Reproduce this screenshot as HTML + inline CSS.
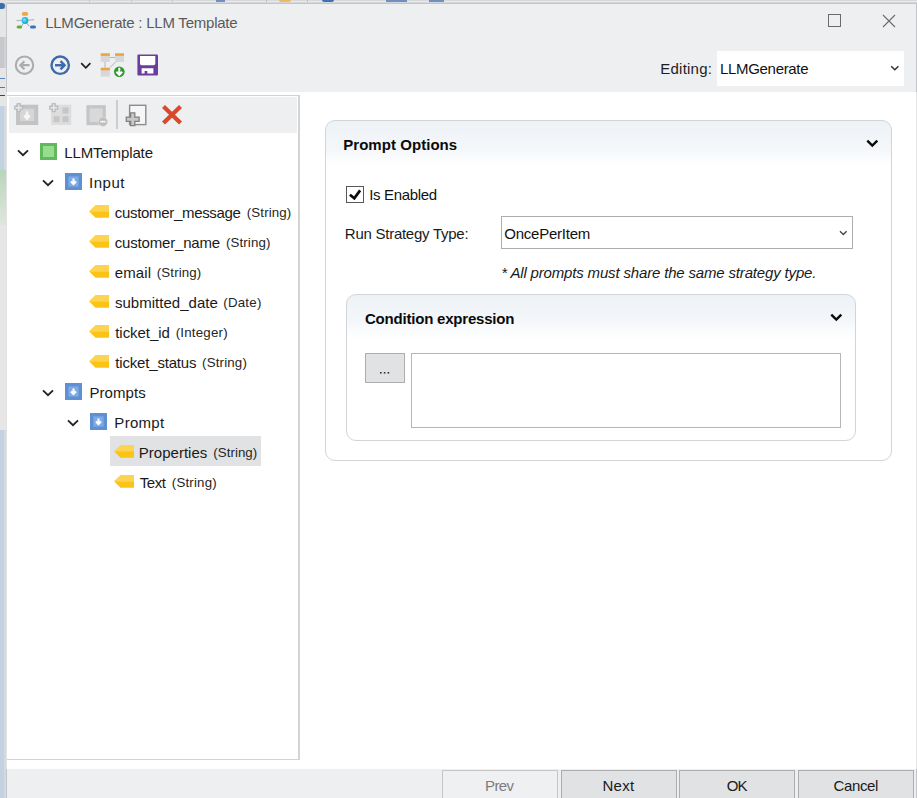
<!DOCTYPE html>
<html><head><meta charset="utf-8">
<style>
*{box-sizing:border-box;margin:0;padding:0}
html,body{width:917px;height:798px;overflow:hidden;background:#eeeff1}
body{position:relative;font-family:"Liberation Sans",sans-serif;color:#1a1a1a}
.a{position:absolute}
.t{position:absolute;line-height:1;white-space:pre}
svg{position:absolute;overflow:visible}
</style></head><body>
<!-- background window strip -->
<div class="a" style="left:0;top:0;width:6px;height:798px;background:#c2d2e0"></div>
<div class="a" style="left:4px;top:0;width:2px;height:798px;background:#d2d9e2"></div>
<div class="a" style="left:0;top:0;width:6px;height:3px;background:#dfe0e2"></div>
<div class="a" style="left:0;top:3px;width:5px;height:6px;background:#3b6ea8;border-radius:0 3px 3px 0"></div>
<div class="a" style="left:0;top:9px;width:6px;height:28px;background:#e6e6e7"></div>
<div class="a" style="left:0;top:37px;width:6px;height:31px;background:#c7c8cb"></div>
<div class="a" style="left:4px;top:37px;width:2px;height:31px;background:#d0d1d5"></div>
<div class="a" style="left:0;top:68px;width:6px;height:38px;background:#e6e6e7"></div>
<div class="a" style="left:0;top:78px;width:5px;height:1px;background:#5a86b8"></div>
<div class="a" style="left:0;top:87px;width:5px;height:1px;background:#4a7ab0"></div>
<div class="a" style="left:0;top:95px;width:5px;height:1px;background:#2c4a70"></div>
<div class="a" style="left:0;top:170px;width:6px;height:55px;background:linear-gradient(#b8d6b8,#dfe6df)"></div>
<div class="a" style="left:0;top:225px;width:6px;height:205px;background:#e6e6e7"></div>

<!-- window frame -->
<div class="a" style="left:6px;top:0;width:911px;height:1px;background:#d8d9da"></div>
<div class="a" style="left:6px;top:1px;width:911px;height:1px;background:#e8e9ea"></div>
<div class="a" style="left:6px;top:2px;width:911px;height:1px;background:#d6d7da"></div>
<div class="a" style="left:6px;top:3px;width:911px;height:795px;border-left:1px solid #c5c6c9;border-top:1px solid #c4c5c8;border-right:1px solid #c4c5c8;background:#eeeff1"></div>
<div class="a" style="left:89px;top:0;width:1px;height:2px;background:#c8c8c8"></div>
<div class="a" style="left:131px;top:0;width:1px;height:2px;background:#c8c8c8"></div>
<div class="a" style="left:172px;top:0;width:1px;height:2px;background:#c8c8c8"></div>
<div class="a" style="left:216px;top:0;width:9px;height:2px;background:#6f90bd"></div>
<div class="a" style="left:266px;top:0;width:1px;height:2px;background:#c0c0c0"></div>
<div class="a" style="left:279px;top:0;width:12px;height:2px;background:#f0b860;border-radius:0 0 5px 5px"></div>
<div class="a" style="left:307px;top:0;width:1px;height:2px;background:#c0c0c0"></div>
<div class="a" style="left:322px;top:0;width:12px;height:2px;background:#4472b0;border-radius:0 0 5px 5px"></div>
<div class="a" style="left:386px;top:0;width:21px;height:2px;background:#6f90bd"></div>
<div class="a" style="left:429px;top:0;width:15px;height:2px;background:#6f90bd"></div>
<!-- title -->
<svg style="left:14px;top:10px" width="26" height="22" viewBox="0 0 26 22">
  <defs><radialGradient id="cg" cx="0.4" cy="0.4" r="0.6"><stop offset="0" stop-color="#8fe6f5"/><stop offset="0.6" stop-color="#22bde0"/><stop offset="1" stop-color="#1aa9d0"/></radialGradient></defs>
  <path d="M2.5 10.6L8 10.2M14 10.2L20 9.6" stroke="#b4b4b4" stroke-width="1.1"/>
  <path d="M9.6 13L7.6 16.2M12.6 13L15.2 16.2" stroke="#9a9a9a" stroke-width="0.9"/>
  <rect x="7.8" y="2" width="6.4" height="3.8" rx="1.9" fill="#f0a54a"/>
  <circle cx="11" cy="10.5" r="3.4" fill="url(#cg)"/>
  <rect x="2.6" y="15.5" width="5.5" height="3" rx="1.5" fill="#5cb03c"/>
  <rect x="16" y="15.5" width="6" height="3" rx="1.5" fill="#3d6fc0"/>
</svg>
<svg style="left:828px;top:14px" width="13" height="13"><rect x="0.5" y="0.5" width="12" height="12" fill="none" stroke="#6a6a6a" stroke-width="1"/></svg>
<svg style="left:882px;top:14px" width="14" height="14"><path d="M1 1L13 13M13 1L1 13" stroke="#6a6a6a" stroke-width="1.1"/></svg>

<!-- main toolbar -->
<svg style="left:14px;top:55px" width="21" height="21" viewBox="0 0 21 21">
  <circle cx="10.5" cy="10.2" r="8.7" fill="none" stroke="#acacac" stroke-width="2.1"/>
  <path d="M15.6 10.2H6.4M10.4 6.2L6.4 10.2L10.4 14.2" fill="none" stroke="#acacac" stroke-width="2.3"/>
</svg>
<svg style="left:50px;top:55px" width="21" height="21" viewBox="0 0 21 21">
  <circle cx="10.2" cy="10.2" r="8.7" fill="none" stroke="#3d6aab" stroke-width="2.4"/>
  <path d="M5 10.2H14.6M10.5 6.1L14.6 10.2L10.5 14.3" fill="none" stroke="#3d6aab" stroke-width="2.4"/>
</svg>
<svg style="left:80px;top:62px" width="12" height="8" viewBox="0 0 12 8"><path d="M1.2 1.2L5.8 5.8L10.4 1.2" fill="none" stroke="#1e1e1e" stroke-width="1.7"/></svg>
<svg style="left:100px;top:53px" width="26" height="25" viewBox="0 0 26 25">
  <rect x="0.7" y="2.5" width="9.2" height="6.5" fill="#d6d7da"/>
  <rect x="15" y="2.5" width="9" height="6.5" fill="#d6d7da"/>
  <rect x="0.7" y="17" width="9.2" height="6.6" fill="#d6d7da"/>
  <rect x="0.7" y="0.3" width="9.2" height="2.6" fill="#f0a23c"/>
  <rect x="15" y="0.3" width="9" height="2.6" fill="#f0a23c"/>
  <rect x="0.7" y="14.7" width="9.2" height="2.6" fill="#f0a23c"/>
  <path d="M9.9 4.5H15M5 9V14.7M15.5 9L9.9 14.7" stroke="#a9b1b5" stroke-width="0.9" fill="none"/>
  <circle cx="19.3" cy="18.8" r="5.3" fill="#2b9a2b"/>
  <path d="M19.3 14.8V21.5M16.4 18.8L19.3 21.9L22.2 18.8" stroke="#fff" stroke-width="2" fill="none"/>
</svg>
<svg style="left:137px;top:54px" width="22" height="22" viewBox="0 0 22 22">
  <rect x="0.4" y="0.5" width="20.6" height="21" rx="1" fill="#6c3d9e"/>
  <path d="M3 2H18.3V9.6Q18.3 11.2 16.7 11.2H4.6Q3 11.2 3 9.6Z" fill="#fff"/>
  <path d="M4.6 14.2H16.4V19.6H10.3V17H7.6V19.6H4.6Z" fill="#fff"/>
</svg>

<div class="a" style="left:717px;top:51px;width:187px;height:35px;background:#fff"></div>
<svg style="left:890px;top:65px" width="10" height="7" viewBox="0 0 10 7"><path d="M1.2 1.2L4.8 4.8L8.4 1.2" fill="none" stroke="#333" stroke-width="1.5"/></svg>

<!-- content area -->
<div class="a" style="left:7px;top:92px;width:909px;height:677px;background:#fff"></div>
<div class="a" style="left:6px;top:92px;width:1px;height:677px;background:#e2e2e3"></div>
<div class="a" style="left:916px;top:92px;width:1px;height:677px;background:#e5e5e5"></div>
<!-- left panel -->
<div class="a" style="left:7px;top:95px;width:293px;height:665px;border-top:1px solid #d2d2d2;border-right:2px solid #d4d4d4;border-bottom:1px solid #d2d2d2"></div>
<div class="a" style="left:9px;top:97px;width:288px;height:36px;background:#eeeff1"></div>
<div id="tree">
<!-- tree toolbar -->
<svg style="left:14px;top:103px" width="24" height="24" viewBox="0 0 24 24">
  <rect x="4" y="3.7" width="18.2" height="16.3" fill="#d6d6d6" stroke="#c3c3c3" stroke-width="4"/>
  <path d="M13 8.6V15.4M10.2 12.4L13 15.6L15.8 12.4" stroke="#f6f6f6" stroke-width="2.4" fill="none"/>
  <path d="M3.3 0.8H6.1V3.3H8.6V6.1H6.1V8.6H3.3V6.1H0.8V3.3H3.3Z" fill="#e9e9e9" stroke="#bdbdbd" stroke-width="1.4"/>
</svg>
<svg style="left:49px;top:103px" width="24" height="24" viewBox="0 0 24 24">
  <rect x="2" y="1.7" width="20.3" height="20.3" fill="#dddddd"/>
  <rect x="13.5" y="4.5" width="6" height="6" fill="#c6c6c6"/>
  <rect x="4.6" y="13.2" width="6" height="6" fill="#c6c6c6"/>
  <rect x="13.5" y="13.2" width="6" height="6" fill="#c6c6c6"/>
  <path d="M3.3 0.8H6.1V3.3H8.6V6.1H6.1V8.6H3.3V6.1H0.8V3.3H3.3Z" fill="#e9e9e9" stroke="#bdbdbd" stroke-width="1.4"/>
</svg>
<svg style="left:86px;top:105px" width="24" height="24" viewBox="0 0 24 24">
  <rect x="2" y="1.8" width="16.2" height="16.8" fill="#d9d9d9" stroke="#c5c5c5" stroke-width="3.2"/>
  <circle cx="16.9" cy="16.7" r="4.6" fill="#bdbdbd" stroke="#e0e0e0" stroke-width="0.8"/>
  <path d="M14.2 16.7H19.6" stroke="#f2f2f2" stroke-width="1.8"/>
</svg>
<div class="a" style="left:116px;top:100px;width:2px;height:29px;background:#cbcdd0"></div>
<svg style="left:125px;top:104px" width="24" height="24" viewBox="0 0 24 24">
  <rect x="4.6" y="1.3" width="16.2" height="19.3" fill="#f6f6f6" stroke="#8c8c8c" stroke-width="1.4"/>
  <path d="M5.6 8.8H9.8V13.1H14.1V17.3H9.8V21.6H5.6V17.3H1.3V13.1H5.6Z" fill="#c8c8c8" stroke="#808080" stroke-width="1.3"/>
</svg>
<svg style="left:161px;top:104px" width="23" height="22" viewBox="0 0 23 22">
  <path d="M2.5 2.5L19.5 19M19.5 2.5L2.5 19" stroke="#d8482a" stroke-width="4.2"/>
</svg>

<div class="a" style="left:110px;top:436px;width:151px;height:30px;background:#e1e2e4"></div>
<svg style="left:17px;top:149px" width="12" height="8" viewBox="0 0 12 8"><path d="M1 1.3L6 6.2L11 1.3" fill="none" stroke="#222" stroke-width="1.8"/></svg>
<div class="a" style="left:40px;top:143px;width:17px;height:17px;background:#97dd8f;border:3px solid #62b85c"></div>
<svg style="left:42px;top:179px" width="12" height="8" viewBox="0 0 12 8"><path d="M1 1.3L6 6.2L11 1.3" fill="none" stroke="#222" stroke-width="1.8"/></svg>
<svg style="left:65px;top:173px" width="17" height="17" viewBox="0 0 17 17"><rect x="0" y="0" width="17" height="17" fill="#5f90d2"/><rect x="3.4" y="3.4" width="10.2" height="10.2" fill="#7eabe6"/><path d="M8.5 5.4V10.8M6 8.4L8.5 11L11 8.4" stroke="#fff" stroke-width="2.1" fill="none"/></svg>
<svg style="left:88.5px;top:205px" width="21" height="13" viewBox="0 0 21 13"><defs></defs><path d="M0 6.2L6.5 0H20V6.2Z" fill="#fdd452"/><path d="M0 6.2L6.5 12.8H20V6.2Z" fill="#fbc313"/></svg>
<svg style="left:88.5px;top:235px" width="21" height="13" viewBox="0 0 21 13"><defs></defs><path d="M0 6.2L6.5 0H20V6.2Z" fill="#fdd452"/><path d="M0 6.2L6.5 12.8H20V6.2Z" fill="#fbc313"/></svg>
<svg style="left:88.5px;top:265px" width="21" height="13" viewBox="0 0 21 13"><defs></defs><path d="M0 6.2L6.5 0H20V6.2Z" fill="#fdd452"/><path d="M0 6.2L6.5 12.8H20V6.2Z" fill="#fbc313"/></svg>
<svg style="left:88.5px;top:295px" width="21" height="13" viewBox="0 0 21 13"><defs></defs><path d="M0 6.2L6.5 0H20V6.2Z" fill="#fdd452"/><path d="M0 6.2L6.5 12.8H20V6.2Z" fill="#fbc313"/></svg>
<svg style="left:88.5px;top:325px" width="21" height="13" viewBox="0 0 21 13"><defs></defs><path d="M0 6.2L6.5 0H20V6.2Z" fill="#fdd452"/><path d="M0 6.2L6.5 12.8H20V6.2Z" fill="#fbc313"/></svg>
<svg style="left:88.5px;top:355px" width="21" height="13" viewBox="0 0 21 13"><defs></defs><path d="M0 6.2L6.5 0H20V6.2Z" fill="#fdd452"/><path d="M0 6.2L6.5 12.8H20V6.2Z" fill="#fbc313"/></svg>
<svg style="left:42px;top:389px" width="12" height="8" viewBox="0 0 12 8"><path d="M1 1.3L6 6.2L11 1.3" fill="none" stroke="#222" stroke-width="1.8"/></svg>
<svg style="left:65px;top:383px" width="17" height="17" viewBox="0 0 17 17"><rect x="0" y="0" width="17" height="17" fill="#5f90d2"/><rect x="3.4" y="3.4" width="10.2" height="10.2" fill="#7eabe6"/><path d="M8.5 5.4V10.8M6 8.4L8.5 11L11 8.4" stroke="#fff" stroke-width="2.1" fill="none"/></svg>
<svg style="left:67px;top:419px" width="12" height="8" viewBox="0 0 12 8"><path d="M1 1.3L6 6.2L11 1.3" fill="none" stroke="#222" stroke-width="1.8"/></svg>
<svg style="left:90px;top:413px" width="17" height="17" viewBox="0 0 17 17"><rect x="0" y="0" width="17" height="17" fill="#5f90d2"/><rect x="3.4" y="3.4" width="10.2" height="10.2" fill="#7eabe6"/><path d="M8.5 5.4V10.8M6 8.4L8.5 11L11 8.4" stroke="#fff" stroke-width="2.1" fill="none"/></svg>
<svg style="left:113.5px;top:445px" width="21" height="13" viewBox="0 0 21 13"><defs></defs><path d="M0 6.2L6.5 0H20V6.2Z" fill="#fdd452"/><path d="M0 6.2L6.5 12.8H20V6.2Z" fill="#fbc313"/></svg>
<svg style="left:113.5px;top:475px" width="21" height="13" viewBox="0 0 21 13"><defs></defs><path d="M0 6.2L6.5 0H20V6.2Z" fill="#fdd452"/><path d="M0 6.2L6.5 12.8H20V6.2Z" fill="#fbc313"/></svg>
</div><!--/tree-->

<!-- right panel -->
<div id="right">
<div class="a" style="left:325px;top:120px;width:567px;height:341px;border:1px solid #d2d4d6;border-radius:10px;background:linear-gradient(#edf2f6 0px,#f4f7fa 28px,#ffffff 46px)"></div>
<svg style="left:866px;top:139px" width="13" height="9" viewBox="0 0 13 9"><path d="M1.3 1.6L6.3 6.6L11.3 1.6" fill="none" stroke="#0a0a0a" stroke-width="2.4"/></svg>
<div class="a" style="left:346px;top:186px;width:18px;height:17px;border:1px solid #575757;background:#fff"></div>
<svg style="left:346px;top:186px" width="18" height="17" viewBox="0 0 18 17"><path d="M3.9 8.8L8.3 12.4L14.1 4.4" fill="none" stroke="#0a0a0a" stroke-width="2.7"/></svg>
<div class="a" style="left:501px;top:216px;width:352px;height:33px;border:1px solid #adadad;background:#fff"></div>
<svg style="left:839px;top:230px" width="9" height="7" viewBox="0 0 9 7"><path d="M1 1.2L4.3 4.6L7.6 1.2" fill="none" stroke="#4a4a4a" stroke-width="1.4"/></svg>
<div class="a" style="left:346px;top:294px;width:510px;height:147px;border:1px solid #d2d4d6;border-radius:10px;background:linear-gradient(#edf2f6 0px,#f4f7fa 26px,#ffffff 44px)"></div>
<svg style="left:830px;top:313px" width="13" height="9" viewBox="0 0 13 9"><path d="M1.3 1.6L6.3 6.6L11.3 1.6" fill="none" stroke="#0a0a0a" stroke-width="2.4"/></svg>
<div class="a" style="left:365px;top:353px;width:40px;height:30px;border:1px solid #acadaf;background:#e1e2e4"></div>
<svg style="left:380.3px;top:372px" width="10" height="3"><rect x="0" y="0" width="1.6" height="1.6" fill="#333"/><rect x="3.8" y="0" width="1.6" height="1.6" fill="#333"/><rect x="7.6" y="0" width="1.6" height="1.6" fill="#333"/></svg>
<div class="a" style="left:411px;top:353px;width:430px;height:75px;border:1px solid #b6b6b6;background:#fff"></div>
</div><!--/right-->

<!-- bottom bar -->
<div class="a" style="left:7px;top:769px;width:909px;height:29px;background:#eeeff1"></div>
<div id="buttons">
<div class="a" style="left:442px;top:770px;width:116px;height:40px;border:1px solid #c6c6c6;background:#eff0f2"></div>
<div class="a" style="left:561px;top:770px;width:116px;height:40px;border:1px solid #acadaf;background:#e1e2e4"></div>
<div class="a" style="left:679px;top:770px;width:116px;height:40px;border:1px solid #acadaf;background:#e1e2e4"></div>
<div class="a" style="left:798px;top:770px;width:116px;height:40px;border:1px solid #acadaf;background:#e1e2e4"></div>
</div><!--/buttons-->
<div class="t" style="left:45.15px;top:14.5px;font-size:15px;letter-spacing:-0.226px;color:#5a5a5a">LLMGenerate : LLM Template</div>
<div class="t" style="left:660.35px;top:60.8px;font-size:15px;letter-spacing:0.214px;color:#1e1e1e">Editing:</div>
<div class="t" style="left:720.05px;top:61.3px;font-size:15px;letter-spacing:-0.325px;color:#111">LLMGenerate</div>
<div class="t" style="left:64.25px;top:145.3px;font-size:15px;letter-spacing:-0.13px">LLMTemplate</div>
<div class="t" style="left:89.1px;top:175.3px;font-size:15px;letter-spacing:0.488px">Input</div>
<div class="t" style="left:114.75px;top:205.3px;font-size:15px;letter-spacing:-0.313px">customer_message</div>
<div class="t" style="left:114.75px;top:235.3px;font-size:15px;letter-spacing:-0.175px">customer_name</div>
<div class="t" style="left:114.75px;top:265.3px;font-size:15px;letter-spacing:0.1px">email</div>
<div class="t" style="left:115.0px;top:295.3px;font-size:15px;letter-spacing:0.015px">submitted_date</div>
<div class="t" style="left:115.25px;top:325.3px;font-size:15px;letter-spacing:-0.056px">ticket_id</div>
<div class="t" style="left:115.25px;top:355.3px;font-size:15px;letter-spacing:-0.175px">ticket_status</div>
<div class="t" style="left:89.45px;top:385.3px;font-size:15px;letter-spacing:0.083px">Prompts</div>
<div class="t" style="left:114.35px;top:415.3px;font-size:15px;letter-spacing:0.28px">Prompt</div>
<div class="t" style="left:138.75px;top:445.3px;font-size:15px;letter-spacing:0.022px">Properties</div>
<div class="t" style="left:139.75px;top:475.3px;font-size:15px;letter-spacing:-0.467px">Text</div>
<div class="t" style="left:246.75px;top:205.54px;font-size:13.3px;letter-spacing:0.129px;color:#262626">(String)</div>
<div class="t" style="left:225.95px;top:235.54px;font-size:13.3px;letter-spacing:0.114px;color:#262626">(String)</div>
<div class="t" style="left:156.85px;top:265.54px;font-size:13.3px;letter-spacing:0.1px;color:#262626">(String)</div>
<div class="t" style="left:223.25px;top:295.54px;font-size:13.3px;letter-spacing:0.23px;color:#262626">(Date)</div>
<div class="t" style="left:175.75px;top:325.54px;font-size:13.3px;letter-spacing:0.194px;color:#262626">(Integer)</div>
<div class="t" style="left:202.05px;top:355.54px;font-size:13.3px;letter-spacing:0.171px;color:#262626">(String)</div>
<div class="t" style="left:213.25px;top:445.54px;font-size:13.3px;letter-spacing:0.057px;color:#262626">(String)</div>
<div class="t" style="left:171.85px;top:475.54px;font-size:13.3px;letter-spacing:0.171px;color:#262626">(String)</div>
<div class="t" style="left:343.2px;top:137.0px;font-size:15px;font-weight:bold;letter-spacing:0.05px;color:#0a0a0a">Prompt Options</div>
<div class="t" style="left:369.2px;top:187.3px;font-size:15px;letter-spacing:-0.344px;color:#111">Is Enabled</div>
<div class="t" style="left:344.85px;top:226.1px;font-size:15px;letter-spacing:-0.259px">Run Strategy Type:</div>
<div class="t" style="left:504.25px;top:226.3px;font-size:15px;letter-spacing:-0.225px;color:#111">OncePerItem</div>
<div class="t" style="left:501.3px;top:265.1px;font-size:15px;font-style:italic;letter-spacing:-0.166px">* All prompts must share the same strategy type.</div>
<div class="t" style="left:364.95px;top:311.3px;font-size:15px;font-weight:bold;letter-spacing:-0.203px;color:#0a0a0a">Condition expression</div>
<div class="t" style="left:484.95px;top:777.8px;font-size:15px;letter-spacing:-0.567px;color:#7d7d7d">Prev</div>
<div class="t" style="left:602.45px;top:778.3px;font-size:15px;letter-spacing:0.333px">Next</div>
<div class="t" style="left:726.65px;top:778.3px;font-size:15px;letter-spacing:-0.85px">OK</div>
<div class="t" style="left:833.55px;top:778.3px;font-size:15px;letter-spacing:-0.38px">Cancel</div>
</body></html>
